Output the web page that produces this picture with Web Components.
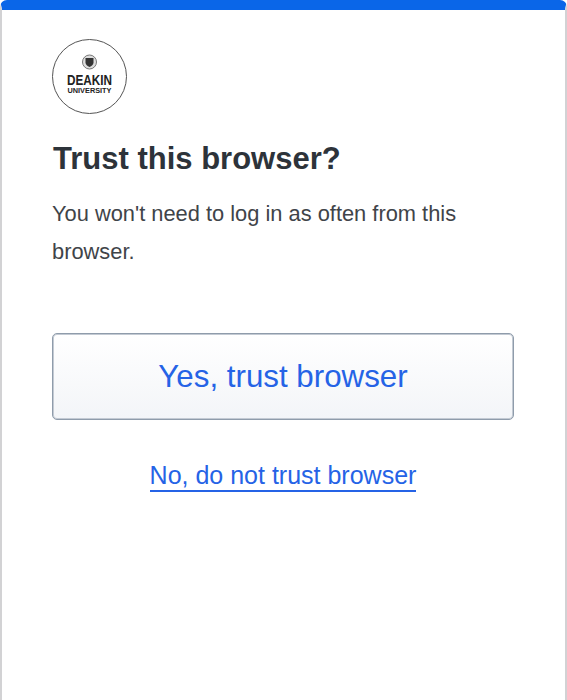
<!DOCTYPE html>
<html lang="en">
<head>
<meta charset="utf-8">
<title>Trust this browser?</title>
<style>
  html, body { margin: 0; height: 100%; background: #fff; }
</style>
</head>
<body>
<trust-card>
  <deakin-logo slot="logo"></deakin-logo>
  <span slot="title">Trust this browser?</span>
  <span slot="text">You won't need to log in as often from this browser.</span>
  <trust-button slot="yes">Yes, trust browser</trust-button>
  <trust-link slot="no">No, do not trust browser</trust-link>
</trust-card>

<script>
// card with the blue strip on top
class TrustCard extends HTMLElement {
  constructor() {
    super();
    this.attachShadow({ mode: 'open' });
    this.shadowRoot.innerHTML = `
      <style>
        :host {
          display: block;
          box-sizing: border-box;
          height: 700px;
          background: #fff;
          border: solid #d2d2d4;
          border-width: 0 2px 0 2px;
          border-top: 10px solid #0a66e8;
          border-radius: 7px 7px 0 0;
          padding: 29px 51px 0 50px;
          font-family: "Liberation Sans", Arial, sans-serif;
        }
        .logo { height: 75px; }
        h1 {
          margin: 27px 0 0;
          padding-left: 1px;
          font-size: 31px;
          line-height: 36px;
          font-weight: 700;
          color: #2d333a;
        }
        p {
          margin: 18px 0 0;
          font-size: 21.85px;
          line-height: 38px;
          color: #3f4449;
        }
        .yes { margin-top: 62px; }
        .no { margin-top: 40px; text-align: center; }
      </style>
      <div class="logo"><slot name="logo"></slot></div>
      <h1><slot name="title"></slot></h1>
      <p><slot name="text"></slot></p>
      <div class="yes"><slot name="yes"></slot></div>
      <div class="no"><slot name="no"></slot></div>
    `;
  }
}

class DeakinLogo extends HTMLElement {
  constructor() {
    super();
    this.attachShadow({ mode: 'open' });
    this.shadowRoot.innerHTML = `
      <style>
        :host { display: block; width: 75px; height: 75px; }
        svg { display: block; }
        text { font-family: "Liberation Sans", Arial, sans-serif; fill: #222; text-anchor: middle; }
      </style>
      <svg width="75" height="75" viewBox="0 0 75 75">
        <circle cx="37.5" cy="37.5" r="37" fill="#fff" stroke="#555" stroke-width="1"/>
        <circle cx="37.5" cy="23" r="7" fill="#ddd" stroke="#777" stroke-width="1"/>
        <path d="M33.500 19h8v4.500c0 2.500-2 3.500-4 4.500-2-1-4-2-4-4.500z" fill="#333"/>
        <text x="37.5" y="46" font-size="15" font-weight="700" textLength="45" lengthAdjust="spacingAndGlyphs">DEAKIN</text>
        <text x="37.5" y="54" font-size="7" font-weight="700" textLength="44" lengthAdjust="spacingAndGlyphs">UNIVERSITY</text>
      </svg>
    `;
  }
}

class TrustButton extends HTMLElement {
  constructor() {
    super();
    this.attachShadow({ mode: 'open' });
    this.shadowRoot.innerHTML = `
      <style>
        :host {
          display: flex;
          align-items: center;
          justify-content: center;
          box-sizing: border-box;
          height: 87px;
          border: 1px solid #8f9cab;
          box-shadow: inset 0 0 0 1px #c3cad3;
          border-radius: 5px;
          background: linear-gradient(#ffffff, #f3f5f8);
          color: #2563e6;
          font-size: 31.3px;
          cursor: pointer;
        }
      </style>
      <slot></slot>
    `;
  }
}

class TrustLink extends HTMLElement {
  constructor() {
    super();
    this.attachShadow({ mode: 'open' });
    this.shadowRoot.innerHTML = `
      <style>
        :host {
          display: inline-block;
          color: #2563e6;
          font-size: 25px;
          line-height: 30px;
          border-bottom: 2px solid #2563e6;
          cursor: pointer;
        }
      </style>
      <slot></slot>
    `;
  }
}

customElements.define('trust-card', TrustCard);
customElements.define('deakin-logo', DeakinLogo);
customElements.define('trust-button', TrustButton);
customElements.define('trust-link', TrustLink);
</script>
</body>
</html>
